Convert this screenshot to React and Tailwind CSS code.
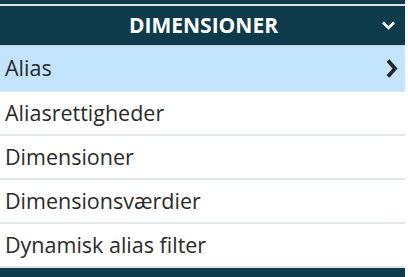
export default function App() {
  const items = ["Aliasrettigheder", "Dimensioner", "Dimensionsværdier", "Dynamisk alias filter"];
  return (
    <div className="w-[408px] h-[277px] bg-white overflow-hidden" style={{ fontFamily: '"Open Sans", sans-serif' }}>
      <div className="w-[405px]">
        <div className="h-[4px] bg-[#0e3b4b]" />
        <div className="h-[2px] bg-[#dfe3e6]" />
        <div className="h-[40px] bg-[#0e3b4b] flex items-center relative border-b border-[#c9d3d8]">
          <div className="flex-1 text-center text-white font-bold text-[21px] leading-none pl-[2px]">DIMENSIONER</div>
          <svg className="absolute right-[9px] top-[14px]" width="15" height="11" viewBox="0 0 15 11">
            <path d="M2 2.5 L7.5 8 L13 2.5" fill="none" stroke="#ffffff" strokeWidth="2.6" />
          </svg>
        </div>
        <div className="h-[46px] bg-[#c2e4fd] flex items-center justify-between pl-[5px] pr-[7px] text-[21.5px] text-[#2a2a2a] border-b border-[#e3e6e8]">
          <span>Alias</span>
          <svg width="13" height="21" viewBox="0 0 13 21">
            <path d="M3 2.5 L10 10.5 L3 18.5" fill="none" stroke="#262626" strokeWidth="3.8" />
          </svg>
        </div>
        {items.map((t) => (
          <div key={t} className="h-[44px] flex items-center pl-[5px] text-[21.5px] text-[#2a2a2a] border-b-2 border-[#e3e6e8]">
            {t}
          </div>
        ))}
        <div className="h-[10px] bg-[#0e3b4b]" />
      </div>
    </div>
  );
}
